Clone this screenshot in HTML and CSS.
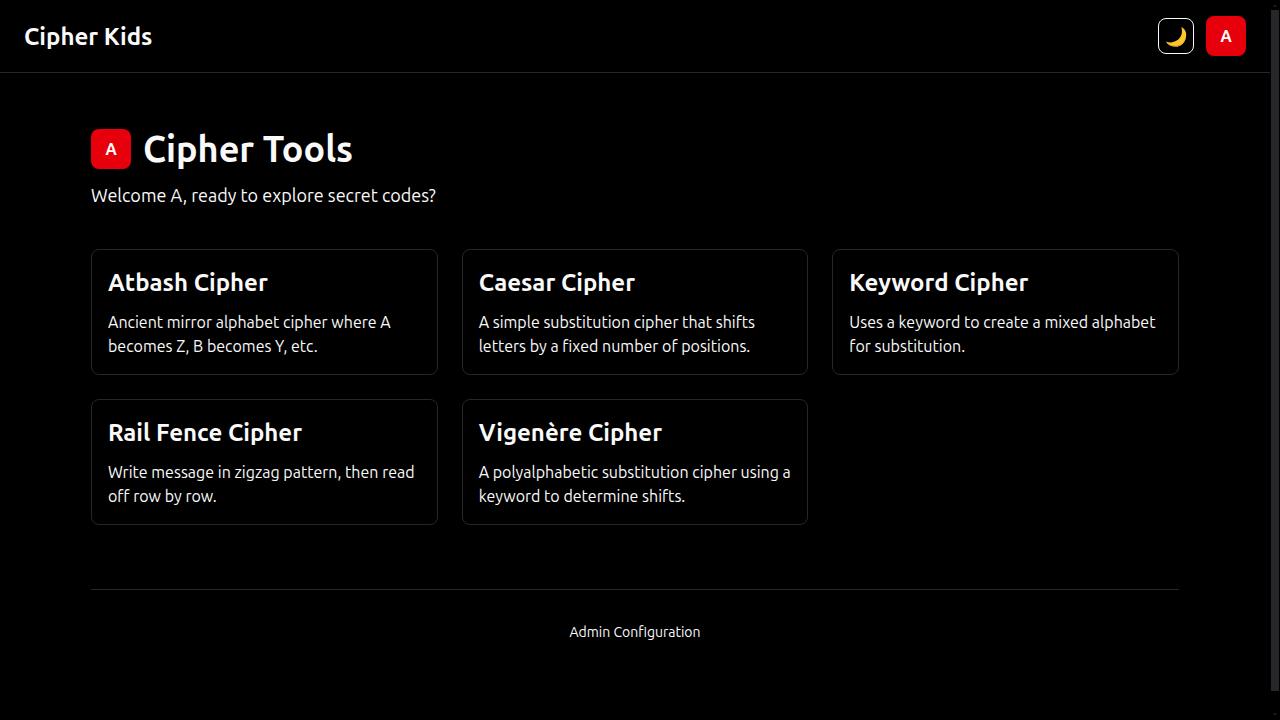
FILE: index.html
```html
<!DOCTYPE html>
<html lang="en">
<head>
<meta charset="utf-8">
<meta name="viewport" content="width=device-width, initial-scale=1">
<title>Cipher Kids</title>
<link rel="stylesheet" href="styles.css">
</head>
<body>
<div class="shell">
  <div class="page">
    <header class="topbar">
      <a class="brand" href="#">Cipher Kids</a>
      <div class="actions">
        <button class="theme-toggle" type="button" aria-label="Toggle theme">
          <svg class="moon" viewBox="6 6 24 24" aria-hidden="true">
            <path d="M23.3 9C27.2 11 28.7 14.4 28.1 18.4C27.4 24.2 23.3 28.5 17.7 28.5C13.2 28.5 9.7 26.8 8 23.4C11.6 25 15.4 24.6 18.7 22.6C23.4 19.6 25.1 14.6 23.3 9Z" fill="#ffc62b"/>
            <path d="M28.1 18.4C27.4 24.2 23.3 28.5 17.7 28.5C13.2 28.5 9.7 26.8 8 23.4C10.5 26.2 13.6 27.6 17.2 27.5C22.6 27.3 26.6 23.6 28.1 18.4Z" fill="#efa52c"/>
          </svg>
        </button>
        <button class="avatar" type="button">A</button>
      </div>
    </header>
    <main class="content">
      <div class="title-row">
        <span class="avatar">A</span>
        <h1 class="title">Cipher Tools</h1>
      </div>
      <p class="welcome">Welcome A, ready to explore secret codes?</p>
      <div class="cards">
        <a class="card" href="#">
          <h2 class="card-title">Atbash Cipher</h2>
          <p class="card-text">Ancient mirror alphabet cipher where A becomes Z, B becomes Y, etc.</p>
        </a>
        <a class="card" href="#">
          <h2 class="card-title">Caesar Cipher</h2>
          <p class="card-text">A simple substitution cipher that shifts letters by a fixed number of positions.</p>
        </a>
        <a class="card" href="#">
          <h2 class="card-title">Keyword Cipher</h2>
          <p class="card-text">Uses a keyword to create a mixed alphabet for substitution.</p>
        </a>
        <a class="card" href="#">
          <h2 class="card-title">Rail Fence Cipher</h2>
          <p class="card-text">Write message in zigzag pattern, then read off row by row.</p>
        </a>
        <a class="card" href="#">
          <h2 class="card-title">Vigenère Cipher</h2>
          <p class="card-text">A polyalphabetic substitution cipher using a keyword to determine shifts.</p>
        </a>
      </div>
      <footer class="footer">
        <a class="admin-link" href="#">Admin Configuration</a>
      </footer>
    </main>
  </div>
  <div class="scrollbar" aria-hidden="true">
    <svg class="arrow" viewBox="0 0 10 10"><path d="M3 6.5L5 4.5L7 6.5Z" fill="#27272a"/></svg>
    <div class="track"><div class="thumb"></div></div>
    <svg class="arrow" viewBox="0 0 10 10"><path d="M3 3.5L5 5.5L7 3.5Z" fill="#27272a"/></svg>
  </div>
</div>
</body>
</html>
```
FILE: styles.css
```css
* {
  box-sizing: border-box;
}

body {
  margin: 0;
  background: #000;
  color: #fafafa;
  font-family: Ubuntu, "Noto Sans", sans-serif;
  font-size: 16px;
  line-height: 24px;
}

h1, h2, p {
  margin: 0;
}

a {
  color: inherit;
  text-decoration: none;
}

.shell {
  display: flex;
  min-height: 100vh;
}

.page {
  flex: 1;
  min-width: 0;
}

.topbar {
  display: flex;
  align-items: center;
  justify-content: space-between;
  padding: 16px 24px;
  border-bottom: 1px solid #27272a;
}

.brand {
  font-size: 24px;
  font-weight: 600;
  line-height: 33px;
}

.actions {
  display: flex;
  align-items: center;
  gap: 12px;
}

.theme-toggle {
  display: flex;
  align-items: center;
  justify-content: center;
  width: 36px;
  height: 36px;
  padding: 0;
  border: 1px solid #fafafa;
  border-radius: 8px;
  background: #000;
}

.moon {
  width: 24px;
  height: 24px;
}

.avatar {
  display: flex;
  align-items: center;
  justify-content: center;
  width: 40px;
  height: 40px;
  padding: 0;
  border: 0;
  border-radius: 8px;
  background: #e7000b;
  color: #fff;
  font-family: inherit;
  font-size: 16px;
  font-weight: 600;
}

.content {
  max-width: 1152px;
  margin: 0 auto;
  padding: 56px 32px;
}

.title-row {
  display: flex;
  align-items: center;
  gap: 12px;
}

.title {
  font-size: 36px;
  font-weight: 600;
  line-height: 40px;
}

.welcome {
  margin-top: 12px;
  font-size: 18px;
  line-height: 28px;
}

.cards {
  display: grid;
  grid-template-columns: repeat(auto-fill, minmax(320px, 1fr));
  gap: 24px;
  margin-top: 40px;
}

.card {
  padding: 16px;
  border: 1px solid #27272a;
  border-radius: 8px;
}

.card-title {
  font-size: 24px;
  font-weight: 600;
  line-height: 33px;
}

.card-text {
  margin-top: 11px;
}

.footer {
  display: flex;
  justify-content: center;
  margin-top: 64px;
  padding-top: 32px;
  border-top: 1px solid #27272a;
}

.admin-link {
  font-size: 14px;
  line-height: 20px;
}

.scrollbar {
  position: sticky;
  top: 0;
  display: flex;
  flex-direction: column;
  width: 10px;
  height: 100vh;
}

.arrow {
  width: 10px;
  height: 10px;
}

.track {
  flex: 1;
  padding: 0 1px;
}

.thumb {
  height: 97.3%;
  background: #27272a;
}
```
